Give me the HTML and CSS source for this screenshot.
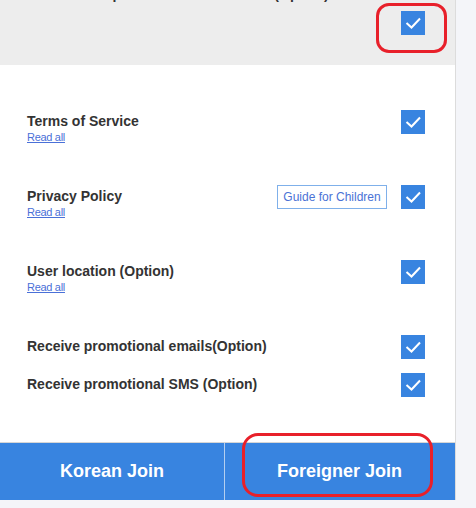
FILE: index.html
```html
<!DOCTYPE html>
<html>
<head>
<meta charset="utf-8">
<link rel="stylesheet" href="styles.css">
</head>
<body>
<div class="panel">
  <section class="top">
    <p class="top-text">and Receive promotional information(Option).</p>
    <div class="top-check">
      <span class="check"><svg viewBox="0 0 24 24"><polyline points="5.5,12 10.5,16.5 19,7.5"/></svg></span>
    </div>
  </section>
  <section class="list">
    <div class="row tall">
      <div class="info"><div class="title">Terms of Service</div><a class="read" href="#">Read all</a></div>
      <span class="check"><svg viewBox="0 0 24 24"><polyline points="5.5,12 10.5,16.5 19,7.5"/></svg></span>
    </div>
    <div class="row tall">
      <div class="info"><div class="title">Privacy Policy</div><a class="read" href="#">Read all</a></div>
      <span class="guide">Guide for Children</span>
      <span class="check"><svg viewBox="0 0 24 24"><polyline points="5.5,12 10.5,16.5 19,7.5"/></svg></span>
    </div>
    <div class="row tall">
      <div class="info"><div class="title">User location (Option)</div><a class="read" href="#">Read all</a></div>
      <span class="check"><svg viewBox="0 0 24 24"><polyline points="5.5,12 10.5,16.5 19,7.5"/></svg></span>
    </div>
    <div class="row short">
      <div class="info"><div class="title">Receive promotional emails(Option)</div></div>
      <span class="check"><svg viewBox="0 0 24 24"><polyline points="5.5,12 10.5,16.5 19,7.5"/></svg></span>
    </div>
    <div class="row short">
      <div class="info"><div class="title">Receive promotional SMS (Option)</div></div>
      <span class="check"><svg viewBox="0 0 24 24"><polyline points="5.5,12 10.5,16.5 19,7.5"/></svg></span>
    </div>
  </section>
  <div class="buttons">
    <button class="btn">Korean Join</button>
    <button class="btn">Foreigner Join</button>
  </div>
</div>
<div class="mark mark-top"></div>
<div class="mark mark-bottom"></div>
</body>
</html>
```
FILE: styles.css
```css
html, body {
  margin: 0;
  padding: 0;
}
body {
  background: #f4f5f9;
  font-family: "Liberation Sans", Arial, sans-serif;
  color: #333;
  position: relative;
  height: 508px;
  overflow: hidden;
}
.panel {
  width: 455px;
  background: #fff;
  border-right: 1px solid #dcdcdc;
}
.top {
  display: flow-root;
  background: #ededed;
  padding: 0 30px 30px 27px;
  height: 35px;
}
.top-text {
  margin: -14px 0 0 0;
  font-size: 14px;
  font-weight: bold;
  line-height: 16px;
  white-space: nowrap;
}
.top-check {
  display: flex;
  justify-content: flex-end;
  margin-top: 9px;
}
.check {
  width: 24px;
  height: 24px;
  background: #3884e0;
  display: block;
  flex: none;
}
.check svg {
  width: 24px;
  height: 24px;
  display: block;
}
.check polyline {
  fill: none;
  stroke: #fff;
  stroke-width: 2;
}
.list {
  padding: 45px 30px 45px 27px;
  border-bottom: 1px solid #d6d6d6;
}
.row {
  display: flex;
  align-items: flex-start;
}
.row.tall { height: 75px; }
.row.short { height: 38px; }
.row:last-child { height: 24px; }
.info {
  flex: 1;
  display: flex;
  flex-direction: column;
}
.title {
  font-size: 14px;
  font-weight: bold;
  line-height: 23px;
}
.read {
  font-size: 11px;
  line-height: 13px;
  color: #4a70d8;
  text-decoration: underline;
  margin-top: -2px;
  align-self: flex-start;
  letter-spacing: -0.3px;
}
.guide {
  box-sizing: border-box;
  height: 24px;
  width: 110px;
  border: 1px solid #7fb0ea;
  color: #4a72d6;
  font-size: 12px;
  line-height: 22px;
  text-align: center;
  margin-right: 14px;
}
.buttons {
  display: flex;
  height: 57px;
  background: #3884e0;
}
.btn {
  flex: none;
  background: #3884e0;
  border: 0;
  color: #fff;
  font-family: "Liberation Sans", Arial, sans-serif;
  font-size: 18px;
  font-weight: bold;
  padding: 0;
  height: 57px;
}
.btn:first-child {
  width: 225px;
  border-right: 1px solid #b4cff0;
}
.btn:last-child {
  width: 229px;
}
.mark {
  position: absolute;
  border: 3.5px solid #e8202a;
  border-radius: 13px;
  box-sizing: border-box;
}
.mark-top {
  left: 376px;
  top: 3px;
  width: 71px;
  height: 50px;
}
.mark-bottom {
  left: 242px;
  top: 433px;
  width: 191px;
  height: 64px;
  border-radius: 16px;
}
```
